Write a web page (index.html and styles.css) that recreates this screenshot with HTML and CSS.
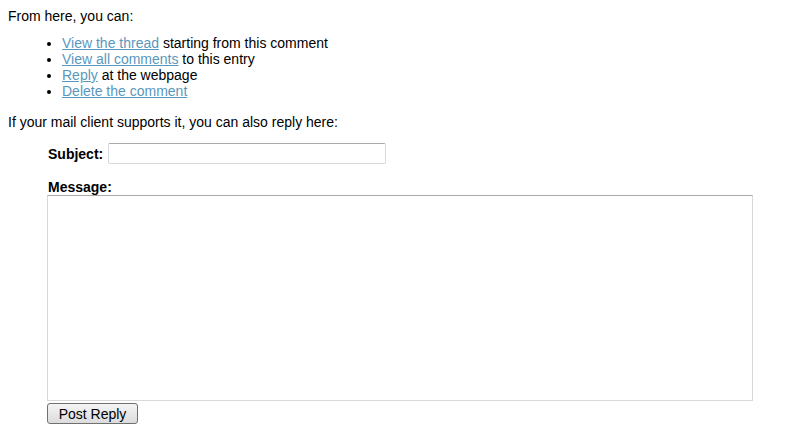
FILE: index.html
```html
<!DOCTYPE html>
<html lang="en">
<head>
    <meta charset="UTF-8">
    <title>Reply to comment</title>
    <link rel="stylesheet" href="styles.css">
</head>
<body>

    <p class="intro">From here, you can:</p>
    <ul class="actions">
        <li><a href="#">View the thread</a> starting from this comment</li>
        <li><a href="#">View all comments</a> to this entry</li>
        <li><a href="#">Reply</a> at the webpage</li>
        <li><a href="#">Delete the comment</a></li>
    </ul>

    <p class="intro">If your mail client supports it, you can also reply here:</p>

    <form class="reply-form">
        <div class="subject-row">
            <label for="subject">Subject:</label>
            <input type="text" id="subject" name="subject">
        </div>
        <div class="message-row">
            <label for="message">Message:</label>
            <textarea id="message" name="message"></textarea>
        </div>
        <button type="button" class="post-button">Post Reply</button>
    </form>

</body>
</html>
```

FILE: styles.css
```css
body {
    font-family: "Liberation Sans", Arial, sans-serif;
    font-size: 14px;
    line-height: 16px;
    color: #000;
    background-color: #fff;
    margin: 8px;
}
.intro {
    margin: 0;
}
.actions {
    margin: 11px 0 15px 0;
    padding-left: 54px;
}
.actions a {
    color: #5a97bd;
}
.reply-form {
    margin: 13px 0 0 40px;
}
.reply-form label {
    font-weight: bold;
}
.subject-row {
    display: flex;
    align-items: center;
    gap: 5px;
}
.subject-row input {
    width: 274px;
    height: 17px;
    padding: 1px;
    border: 1px solid #d6d9dd;
    border-top-color: #aaa;
    border-radius: 2px;
    font: inherit;
}
.message-row {
    margin-top: 16px;
}
.message-row label {
    display: block;
    line-height: 15px;
}
.message-row textarea {
    display: block;
    box-sizing: border-box;
    width: 706px;
    height: 206px;
    margin: 0 0 0 -1px;
    border: 1px solid #d6d9dd;
    border-top-color: #aaa;
    resize: none;
}
.post-button {
    margin: 2px 0 0 -1px;
    width: 91px;
    height: 21px;
    padding: 0;
    font-family: "Liberation Sans", Arial, sans-serif;
    font-size: 14px;
    color: #000;
    background: linear-gradient(#f4f4f4, #dcdcdc);
    border: 1px solid #707070;
    border-radius: 3px;
}
```
